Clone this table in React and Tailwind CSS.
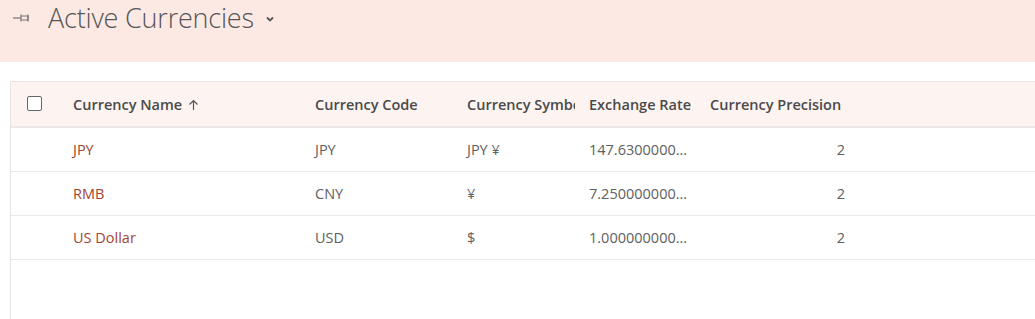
import React from 'react'

const rows = [
  { name: 'JPY', code: 'JPY', symbol: 'JPY ¥', rate: '147.6300000...', precision: '2' },
  { name: 'RMB', code: 'CNY', symbol: '¥', rate: '7.250000000...', precision: '2' },
  { name: 'US Dollar', code: 'USD', symbol: '$', rate: '1.000000000...', precision: '2' },
]

function PinIcon() {
  return (
    <svg width="20" height="12" viewBox="0 0 20 12" fill="none" stroke="#777" strokeWidth="1.2">
      <path d="M1 6h8" />
      <path d="M9 2.5v7" />
      <path d="M9 4h7v4H9" />
      <path d="M16 2.5v7" />
    </svg>
  )
}

function App() {
  return (
    <div className="h-[319px] w-[1035px] overflow-hidden bg-white font-['Open_Sans',sans-serif]">
      {/* Title band */}
      <header className="h-[62px] bg-[#fce9e4]">
        <div className="flex h-[35px] items-center pl-[12px]">
          <PinIcon />
          <h1 className="ml-[16px] text-[27px] font-light leading-[35px] tracking-[-0.2px] text-[#555]">
            Active Currencies
          </h1>
          <svg className="ml-[11px] mt-[2px]" width="10" height="8" viewBox="0 0 10 8" fill="none" stroke="#555" strokeWidth="1.8">
            <path d="M2 2.5l3 3 3-3" />
          </svg>
        </div>
      </header>

      {/* Grid card */}
      <main className="pl-[10px] pt-[19px]">
        <div className="h-[300px] border-l border-t border-[#e6e3e2]">
          <div className="flex h-[46px] items-center border-b-2 border-[#ebe8e7] bg-[#fdf4f1] pt-[2px] text-[14.5px] font-semibold text-[#4a4a4a]">
            <div className="w-[62px] pl-[16px]">
              <div className="mb-[3px] h-[15px] w-[15px] rounded-[2px] border border-[#666] bg-white" />
            </div>
            <div className="flex w-[242px] items-center">
              Currency Name
              <svg className="ml-[6px]" width="11" height="12" viewBox="0 0 11 12" fill="none" stroke="#555" strokeWidth="1.2">
                <path d="M5.5 11V1.5M1.5 5.5l4-4 4 4" />
              </svg>
            </div>
            <div className="w-[152px]">Currency Code</div>
            <div className="w-[122px]">
              <div className="w-[108px] overflow-hidden whitespace-nowrap">Currency Symbol</div>
            </div>
            <div className="w-[121px]">Exchange Rate</div>
            <div className="w-[140px]">Currency Precision</div>
          </div>

          {rows.map((r) => (
            <div key={r.name} className="flex h-[44px] items-center border-b border-[#ebe8e7] text-[14.5px] text-[#606060]">
              <div className="w-[62px]" />
              <div className="w-[242px] text-[#a2452f]">{r.name}</div>
              <div className="w-[152px]">{r.code}</div>
              <div className="w-[122px]">{r.symbol}</div>
              <div className="w-[121px]">{r.rate}</div>
              <div className="w-[140px] pr-[5px] text-right">{r.precision}</div>
            </div>
          ))}
        </div>
      </main>
    </div>
  )
}

export default App
